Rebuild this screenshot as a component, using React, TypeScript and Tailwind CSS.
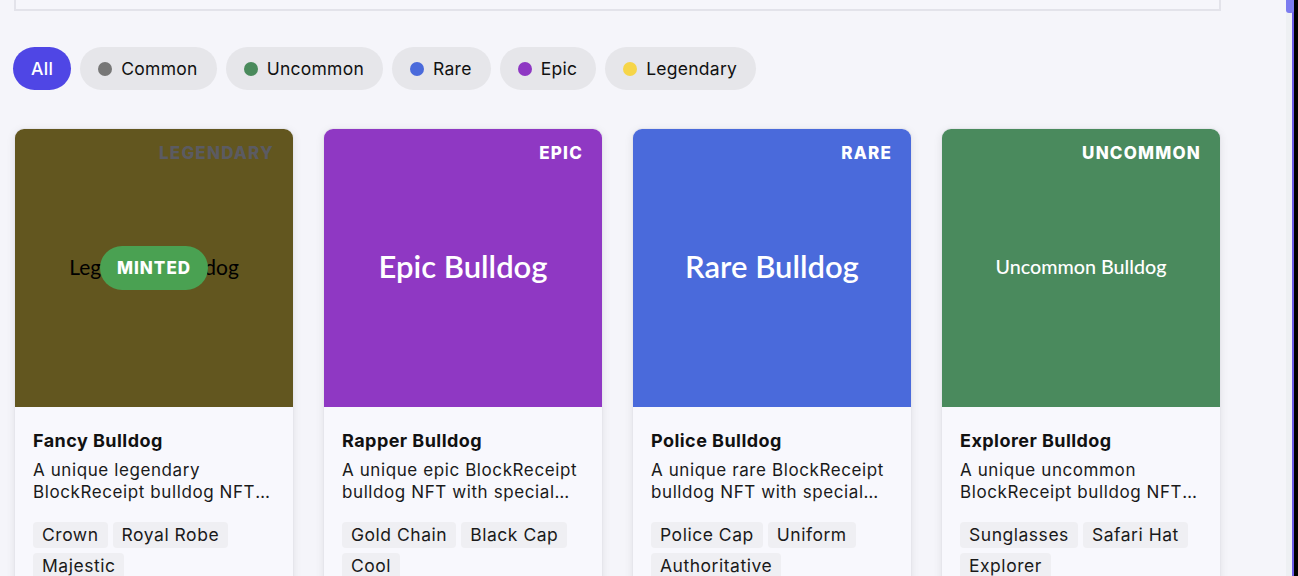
import React from "react";

type Card = {
  name: string;
  desc: string;
  rarity: string;
  bg: string;
  labelClass: string;
  center: string;
  centerClass: string;
  tags: string[];
  minted?: boolean;
};

const cards: Card[] = [
  {
    name: "Fancy Bulldog",
    desc: "A unique legendary BlockReceipt bulldog NFT with special traits",
    rarity: "LEGENDARY",
    bg: "bg-[#62561f]",
    labelClass: "text-[#5b5b62]",
    center: "Legendary Bulldog",
    centerClass: "text-[21px] text-black font-normal",
    tags: ["Crown", "Royal Robe", "Majestic"],
    minted: true,
  },
  {
    name: "Rapper Bulldog",
    desc: "A unique epic BlockReceipt bulldog NFT with special traits",
    rarity: "EPIC",
    bg: "bg-[#8f38c3]",
    labelClass: "text-white",
    center: "Epic Bulldog",
    centerClass: "text-[31px] text-white font-semibold",
    tags: ["Gold Chain", "Black Cap", "Cool"],
  },
  {
    name: "Police Bulldog",
    desc: "A unique rare BlockReceipt bulldog NFT with special traits",
    rarity: "RARE",
    bg: "bg-[#4a6adb]",
    labelClass: "text-white",
    center: "Rare Bulldog",
    centerClass: "text-[31px] text-white font-semibold",
    tags: ["Police Cap", "Uniform", "Authoritative"],
  },
  {
    name: "Explorer Bulldog",
    desc: "A unique uncommon BlockReceipt bulldog NFT with special traits",
    rarity: "UNCOMMON",
    bg: "bg-[#4a8a5d]",
    labelClass: "text-white",
    center: "Uncommon Bulldog",
    centerClass: "text-[19.7px] text-white font-medium",
    tags: ["Sunglasses", "Safari Hat", "Explorer"],
  },
];

const filters = [
  { label: "Common", dot: "bg-[#777777]" },
  { label: "Uncommon", dot: "bg-[#4a8a5c]" },
  { label: "Rare", dot: "bg-[#4a6adb]" },
  { label: "Epic", dot: "bg-[#8e37c3]" },
  { label: "Legendary", dot: "bg-[#f6d548]" },
];

export default function App() {
  return (
    <div
      className="flex h-[576px] w-full overflow-hidden bg-[#f5f5fa] text-[#111]"
      style={{ fontFamily: "Inter, 'Noto Sans', sans-serif" }}
    >
      <div className="flex-1 overflow-hidden pl-[14px] pr-[65px]">
        <div className="h-[11px] border-x-2 border-b-2 border-[#e3e3ea] bg-[#f6f6fb]" />

        <div className="mt-[36px] -ml-[1px] flex items-center gap-[9px]">
          <button className="flex h-[43px] items-center rounded-full bg-[#4f46e5] px-[18px] pt-[2px] text-[17.5px] font-medium tracking-[0.02em] text-white">
            All
          </button>
          {filters.map((f) => (
            <button
              key={f.label}
              className="flex h-[43px] items-center gap-[9px] rounded-full bg-[#e6e6ea] pl-[18px] pr-[19px] text-[17.5px] tracking-[0.015em] text-[#111]"
            >
              <span className={`h-[14px] w-[14px] rounded-full ${f.dot}`} />
              <span className="pt-[2px]">{f.label}</span>
            </button>
          ))}
        </div>

        <div className="mt-[38px] grid grid-cols-4 gap-[29px]">
          {cards.map((c) => (
            <div
              key={c.name}
              className="overflow-hidden rounded-t-[10px] border border-[#e6e6ec] bg-[#f8f8fd] shadow-[0_2px_8px_rgba(0,0,0,0.08)]"
            >
              <div className={`relative flex aspect-square items-center justify-center pb-[3px] ${c.bg}`}>
                <span
                  className={`absolute right-[19px] top-[12px] text-[17px] font-extrabold tracking-[0.07em] ${c.labelClass}`}
                >
                  {c.rarity}
                </span>
                <span
                  className={c.centerClass}
                  style={{ fontFamily: "Lato, sans-serif" }}
                >
                  {c.center}
                </span>
                {c.minted && (
                  <span className="absolute left-1/2 top-1/2 flex h-[44px] w-[108px] -translate-x-1/2 -translate-y-1/2 items-center justify-center rounded-full bg-[#4aa152] pt-[2px] text-[17px] font-extrabold tracking-[0.06em] text-white">
                    MINTED
                  </span>
                )}
              </div>
              <div className="pl-[18px] pr-[16px] pt-[22px] pb-[20px]">
                <div className="text-[18px] font-bold leading-[24px] tracking-[0.025em]">{c.name}</div>
                <p className="mt-[6px] line-clamp-2 text-[17px] leading-[22px] tracking-[0.035em] text-[#1a1a1a]">
                  {c.desc}
                </p>
                <div className="mt-[19px] flex flex-wrap gap-[5px]">
                  {c.tags.map((t) => (
                    <span
                      key={t}
                      className="rounded-[4px] bg-[#efeff3] px-[9px] text-[17.5px] leading-[26px] tracking-[0.03em] text-[#1a1a1a]"
                    >
                      {t}
                    </span>
                  ))}
                </div>
              </div>
            </div>
          ))}
        </div>
      </div>

      <div className="relative w-[6px] bg-[#eef0f3]">
        <div className="absolute left-0 top-0 h-[13px] w-[8px] rounded-b-[3px] bg-[#7c7cf0]" />
      </div>
      <div className="w-[2px] bg-[#6b5ce8]" />
      <div className="w-[4px] bg-black" />
    </div>
  );
}
